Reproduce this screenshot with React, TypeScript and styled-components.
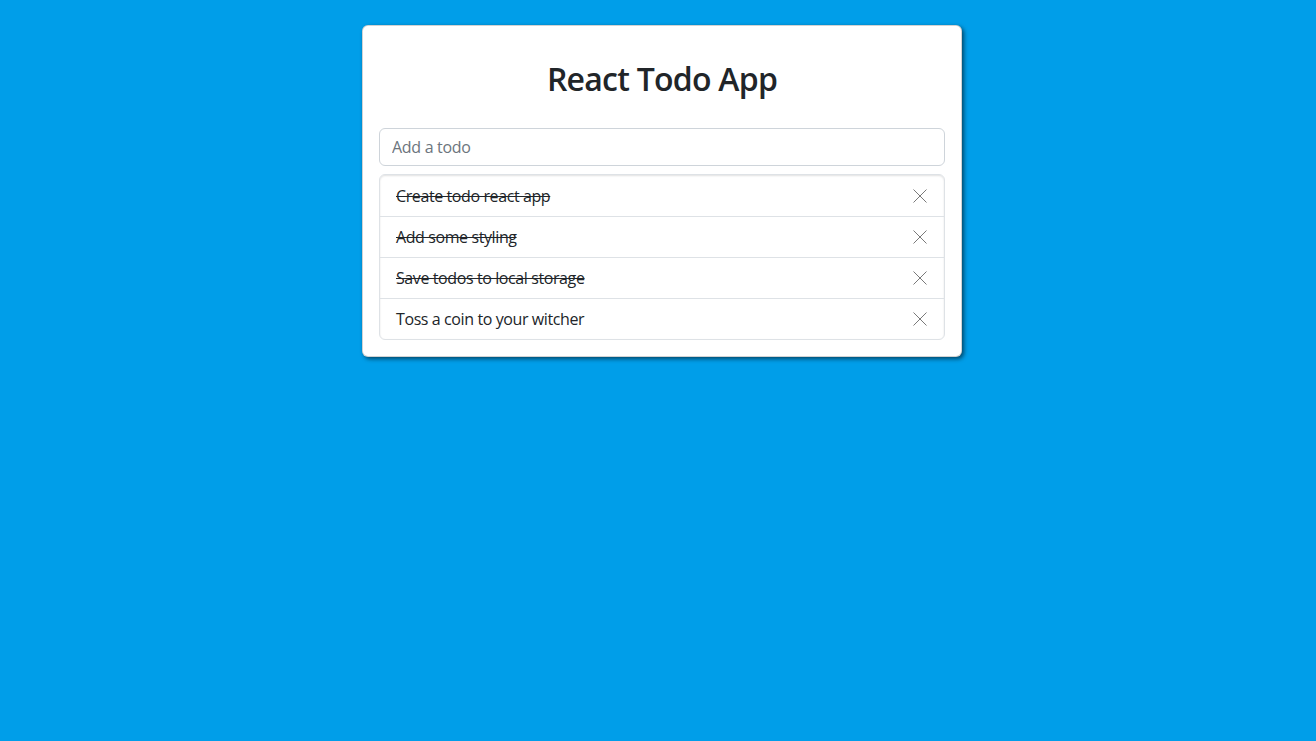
import styled, { createGlobalStyle } from "styled-components";

interface Todo {
  id: number;
  text: string;
  done: boolean;
}

const todos: Todo[] = [
  { id: 1, text: "Create todo react app", done: true },
  { id: 2, text: "Add some styling", done: true },
  { id: 3, text: "Save todos to local storage", done: true },
  { id: 4, text: "Toss a coin to your witcher", done: false },
];

const GlobalStyle = createGlobalStyle`
  * {
    box-sizing: border-box;
  }
  body {
    margin: 0;
    background-color: #009ee9;
    font-family: "Segoe UI", "Open Sans", "Liberation Sans", sans-serif;
    color: #212529;
  }
`;

const Page = styled.div`
  min-height: 100vh;
  display: flex;
  justify-content: center;
  align-items: flex-start;
  padding: 25px 0 0 8px;
`;

const Card = styled.div`
  width: 600px;
  background-color: #fff;
  border: 1px solid rgba(0, 0, 0, 0.175);
  border-radius: 6px;
  padding: 16px;
  box-shadow: 2px 2px 4px rgba(0, 0, 0, 0.55);
`;

const Title = styled.h2`
  margin: 18px 0 30px;
  font-size: 32px;
  font-weight: 600;
  line-height: 1.2;
  letter-spacing: -0.75px;
  text-align: center;
`;

const Input = styled.input`
  display: block;
  width: 100%;
  height: 38px;
  padding: 6px 12px;
  font-family: inherit;
  font-size: 16px;
  letter-spacing: -0.3px;
  color: #212529;
  border: 1px solid #ced4da;
  border-radius: 6px;
  outline: none;

  &::placeholder {
    color: #6c757d;
  }
`;

const List = styled.ul`
  margin: 8px 0 0;
  padding: 0;
  list-style: none;
  border: 1px solid #dee2e6;
  border-radius: 6px;
  box-shadow: inset 0 1px 2px rgba(0, 0, 0, 0.12);
`;

const Item = styled.li`
  display: flex;
  align-items: center;
  justify-content: space-between;
  height: 41px;
  padding: 0 16px;
  font-size: 16px;
  letter-spacing: -0.4px;

  & + & {
    border-top: 1px solid #dee2e6;
  }
`;

const ItemText = styled.span<{ $done: boolean }>`
  text-decoration: ${(p) => (p.$done ? "line-through" : "none")};
`;

const CloseButton = styled.button`
  display: flex;
  align-items: center;
  justify-content: center;
  width: 16px;
  height: 16px;
  padding: 0;
  border: 0;
  background: transparent;
  cursor: pointer;
  opacity: 0.65;
`;

const CloseIcon = () => (
  <svg width="14" height="14" viewBox="0 0 14 14" fill="none">
    <path d="M0.5 0.5L13.5 13.5M13.5 0.5L0.5 13.5" stroke="#333" strokeWidth="1" />
  </svg>
);

export default function App() {
  return (
    <>
      <GlobalStyle />
      <Page>
        <Card>
          <Title>React Todo App</Title>
          <Input type="text" placeholder="Add a todo" />
          <List>
            {todos.map((todo) => (
              <Item key={todo.id}>
                <ItemText $done={todo.done}>{todo.text}</ItemText>
                <CloseButton aria-label="Delete">
                  <CloseIcon />
                </CloseButton>
              </Item>
            ))}
          </List>
        </Card>
      </Page>
    </>
  );
}
